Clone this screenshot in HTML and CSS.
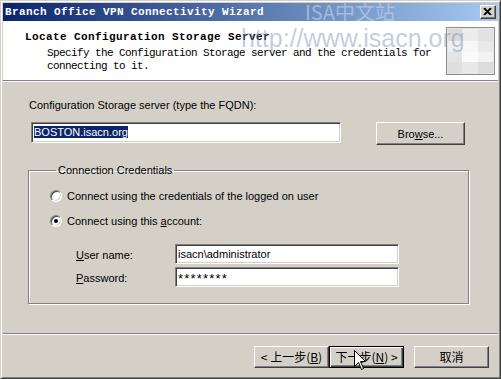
FILE: index.html
```html
<!DOCTYPE html>
<html lang="en">
  <head>
    <meta charset="UTF-8" />
    <title>Branch Office VPN Connectivity Wizard</title>
    <link rel="stylesheet" href="styles.css">
  </head>
  <body>
    <div class="wizard">
      <div class="titlebar">
        <span class="caption">Branch Office VPN Connectivity Wizard</span>
        <span class="mark-title">ISA中文站</span>
        <span class="close">
          <svg width="16" height="14" viewBox="0 0 16 14">
            <path d="M4 3 L11 10 M5 3 L12 10 M11 3 L4 10 M12 3 L5 10" stroke="#000" stroke-width="1.2" />
          </svg>
        </span>
      </div>

      <div class="head">
        <div class="head-text">
          <h1 class="step">Locate Configuration Storage Server</h1>
          <p class="step-desc">Specify the Configuration Storage server and the credentials for<br />connecting to it.</p>
        </div>
        <span class="mark-url">http://www.isacn.org</span>
        <svg class="head-icon" width="49" height="48" viewBox="0 0 49 48">
          <rect x="0.5" y="0.5" width="48" height="47" fill="#e6e6e6" stroke="#8c8c8c" />
          <rect x="2" y="2" width="14" height="12" fill="#dadada" />
          <rect x="16" y="2" width="16" height="12" fill="#ececec" />
          <rect x="32" y="2" width="15" height="12" fill="#e2e2e2" />
          <rect x="2" y="14" width="14" height="11" fill="#efefef" />
          <rect x="16" y="14" width="16" height="11" fill="#f7f7f7" />
          <rect x="32" y="14" width="15" height="11" fill="#e9e9e9" />
          <rect x="2" y="25" width="14" height="10" fill="#e4e4e4" />
          <rect x="16" y="25" width="16" height="10" fill="#fbfbfb" />
          <rect x="32" y="25" width="15" height="10" fill="#f3f3f3" />
          <rect x="2" y="35" width="14" height="11" fill="#dedede" />
          <rect x="16" y="35" width="16" height="11" fill="#e8e8e8" />
          <rect x="32" y="35" width="15" height="11" fill="#dcdcdc" />
        </svg>
      </div>

      <div class="content">
        <div class="field-label">Configuration Storage server (type the FQDN):</div>
        <div class="server-row">
          <div class="edit server"><span class="sel">BOSTON.isacn.org</span></div>
          <button class="btn browse">Bro<u>w</u>se...</button>
        </div>

        <fieldset class="group">
          <legend>Connection Credentials</legend>
          <div class="option"><span class="radio"></span><span>Connect using the credentials of the logged on user</span></div>
          <div class="option"><span class="radio on"></span><span>Connect using this <u>a</u>ccount:</span></div>
          <div class="creds">
            <span class="cred-label"><u>U</u>ser name:</span>
            <div class="edit cred">isacn\administrator</div>
            <span class="cred-label"><u>P</u>assword:</span>
            <div class="edit cred secret">********</div>
          </div>
        </fieldset>
      </div>

      <div class="footer">
        <button class="btn nav">&lt; 上一步(<u>B</u>)</button>
        <button class="btn nav default">下一步(<u>N</u>) &gt;</button>
        <button class="btn nav cancel">取消</button>
      </div>

      <!-- mouse pointer over the Next button -->
      <svg class="cursor" width="13" height="21" viewBox="0 0 13 21">
        <path d="M0.5 0.5 L0.5 16.5 L4.5 12.5 L7.5 19.5 L9.5 18.5 L6.5 11.5 L11.5 11.5 Z" fill="#fff" stroke="#000" />
      </svg>
    </div>
  </body>
</html>
```

FILE: styles.css
```css
body {
  margin: 0;
  background: #d4d0c8;
  font-family: "Liberation Sans", Arial, sans-serif;
  font-size: 11px;
  color: #000;
}
.wizard {
  position: relative;
  width: 501px;
  height: 379px;
  box-sizing: border-box;
  background: #d4d0c8;
  border: 1px solid;
  border-color: #d4d0c8 #404040 #404040 #d4d0c8;
  box-shadow: inset 1px 1px 0 #fff, inset -1px -1px 0 #808080;
  padding: 2px;
  display: flex;
  flex-direction: column;
  overflow: hidden;
}

/* title bar */
.titlebar {
  position: relative;
  height: 18px;
  flex: none;
  display: flex;
  align-items: center;
  padding-left: 2px;
  background: linear-gradient(to right, #0a246a, #a6caf0);
}
.titlebar .caption {
  color: #fff;
  font-family: "Liberation Mono", monospace;
  font-weight: bold;
  font-size: 11px;
  letter-spacing: 0.4px;
}
.titlebar .mark-title {
  position: absolute;
  left: 302px;
  top: -3px;
  font-family: "Noto Sans CJK SC", sans-serif;
  font-size: 20px;
  line-height: 24px;
  color: rgba(200, 214, 234, 0.6);
}
.titlebar .close {
  margin-left: auto;
  margin-right: 2px;
  width: 14px;
  height: 12px;
  background: #d4d0c8;
  border: 1px solid;
  border-color: #fff #404040 #404040 #fff;
  box-shadow: inset -1px -1px 0 #808080;
  display: flex;
  overflow: hidden;
}
.titlebar .close svg {
  margin: -1px 0 0 -1px;
}

/* header */
.head {
  position: relative;
  height: 59px;
  flex: none;
  display: flex;
  background: #fff;
  border-bottom: 1px solid #808080;
}
.head-text {
  padding: 9px 0 0 22px;
  font-family: "Liberation Mono", monospace;
}
.head .step {
  margin: 0;
  font-size: 11px;
  font-weight: bold;
  line-height: 14px;
  letter-spacing: 0.4px;
}
.head .step-desc {
  margin: 3px 0 0 22px;
  font-size: 11px;
  line-height: 13px;
  letter-spacing: -0.6px;
}
.head .mark-url {
  position: absolute;
  left: 238px;
  top: 2px;
  font-family: "Liberation Sans", sans-serif;
  font-size: 25px;
  line-height: 30px;
  color: rgba(120, 140, 178, 0.45);
}
.head-icon {
  margin: 6px 3px 0 auto;
}

/* body */
.content {
  flex: 1;
  border-top: 1px solid #fff;
  padding: 17px 0 0 26px;
}
.field-label {
  line-height: 13px;
}
.server-row {
  display: flex;
  margin: 10px 0 0 2px;
}
.edit {
  box-sizing: border-box;
  height: 20px;
  background: #fff;
  border: 1px solid;
  border-color: #808080 #fff #fff #808080;
  box-shadow: inset 1px 1px 0 #404040, inset -1px -1px 0 #d4d0c8;
  padding: 3px 0 0 2px;
  line-height: 13px;
  white-space: nowrap;
  overflow: hidden;
}
.edit.server {
  width: 310px;
  height: 21px;
}
.edit.secret {
  font-size: 13px;
  letter-spacing: 1.2px;
  padding-top: 4px;
}
.sel {
  background: #0a246a;
  color: #fff;
}
.btn {
  box-sizing: border-box;
  background: #d4d0c8;
  border: 1px solid;
  border-color: #fff #404040 #404040 #fff;
  box-shadow: inset -1px -1px 0 #808080;
  font-family: "Liberation Sans", Arial, sans-serif;
  font-size: 11px;
  color: #000;
  padding: 0;
}
.btn.browse {
  width: 89px;
  height: 23px;
  margin-left: 35px;
}

/* group box */
.group {
  width: 441px;
  box-sizing: border-box;
  margin: 19px 0 0 -1px;
  padding: 0 0 16px 21px;
  border: 1px solid #808080;
  box-shadow: 1px 1px 0 #fff, inset 1px 1px 0 #fff;
}
.group legend {
  margin-left: 6px;
  padding: 0 2px;
  line-height: 13px;
}
.option {
  display: flex;
  align-items: center;
  height: 16px;
  margin-top: 11px;
}
.option + .option {
  margin-top: 9px;
}
.radio {
  position: relative;
  flex: none;
  width: 12px;
  height: 12px;
  box-sizing: border-box;
  margin-right: 5px;
  border-radius: 50%;
  background: #fff;
  border: 1px solid;
  border-color: #808080 #fff #fff #808080;
  box-shadow: inset 1px 1px 0 #404040, inset -1px -1px 0 #d4d0c8;
}
.radio.on::after {
  content: "";
  position: absolute;
  left: 3px;
  top: 3px;
  width: 4px;
  height: 4px;
  border-radius: 50%;
  background: #000;
}
.creds {
  display: grid;
  grid-template-columns: 99px 224px;
  row-gap: 3px;
  align-items: center;
  margin: 15px 0 0 26px;
}
.creds .cred-label {
  padding-top: 1px;
}

/* footer */
.footer {
  height: 43px;
  box-sizing: border-box;
  flex: none;
  display: flex;
  justify-content: flex-end;
  align-items: flex-start;
  padding: 12px 9px 0 0;
  border-top: 1px solid #808080;
  box-shadow: inset 0 1px 0 #fff;
}
.btn.nav {
  width: 75px;
  height: 22px;
  font-family: "Noto Sans CJK SC", sans-serif;
  font-size: 12px;
  line-height: 18px;
}
.btn.default {
  border-color: #000;
  box-shadow: inset 1px 1px 0 #fff, inset -1px -1px 0 #404040, inset -2px -2px 0 #808080;
}
.btn.cancel {
  margin-left: 10px;
}

.cursor {
  position: absolute;
  left: 353px;
  top: 349px;
}
```
